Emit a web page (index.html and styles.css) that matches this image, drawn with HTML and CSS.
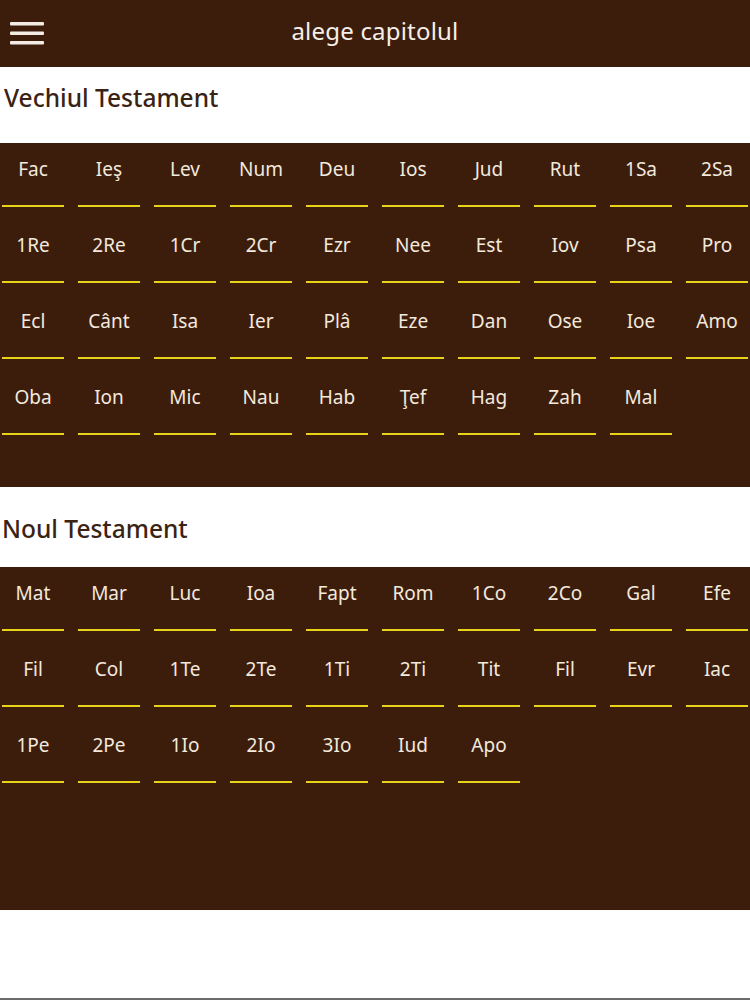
FILE: index.html
```html
<!DOCTYPE html>
<html>
<head>
<meta charset="utf-8">
<title>alege capitolul</title>
<link rel="stylesheet" href="styles.css">
</head>
<body>
<header class="topbar">
  <div class="menu">
    <svg width="34" height="24" viewBox="0 0 34 24"><rect x="0" y="1" width="34" height="3.5" rx="1" fill="#f3ece4"/><rect x="0" y="10.5" width="34" height="3.5" rx="1" fill="#f3ece4"/><rect x="0" y="20" width="34" height="3.5" rx="1" fill="#f3ece4"/></svg>
  </div>
  <h1 class="title">alege capitolul</h1>
</header>

<section class="section">
  <h2 class="section-title vt">Vechiul Testament</h2>
  <div class="grid grid-vt">
    <div class="cell"><span>Fac</span></div>
    <div class="cell"><span>Ieş</span></div>
    <div class="cell"><span>Lev</span></div>
    <div class="cell"><span>Num</span></div>
    <div class="cell"><span>Deu</span></div>
    <div class="cell"><span>Ios</span></div>
    <div class="cell"><span>Jud</span></div>
    <div class="cell"><span>Rut</span></div>
    <div class="cell"><span>1Sa</span></div>
    <div class="cell"><span>2Sa</span></div>
    <div class="cell"><span>1Re</span></div>
    <div class="cell"><span>2Re</span></div>
    <div class="cell"><span>1Cr</span></div>
    <div class="cell"><span>2Cr</span></div>
    <div class="cell"><span>Ezr</span></div>
    <div class="cell"><span>Nee</span></div>
    <div class="cell"><span>Est</span></div>
    <div class="cell"><span>Iov</span></div>
    <div class="cell"><span>Psa</span></div>
    <div class="cell"><span>Pro</span></div>
    <div class="cell"><span>Ecl</span></div>
    <div class="cell"><span>Cânt</span></div>
    <div class="cell"><span>Isa</span></div>
    <div class="cell"><span>Ier</span></div>
    <div class="cell"><span>Plâ</span></div>
    <div class="cell"><span>Eze</span></div>
    <div class="cell"><span>Dan</span></div>
    <div class="cell"><span>Ose</span></div>
    <div class="cell"><span>Ioe</span></div>
    <div class="cell"><span>Amo</span></div>
    <div class="cell"><span>Oba</span></div>
    <div class="cell"><span>Ion</span></div>
    <div class="cell"><span>Mic</span></div>
    <div class="cell"><span>Nau</span></div>
    <div class="cell"><span>Hab</span></div>
    <div class="cell"><span>Ţef</span></div>
    <div class="cell"><span>Hag</span></div>
    <div class="cell"><span>Zah</span></div>
    <div class="cell"><span>Mal</span></div>
  </div>
</section>

<section class="section">
  <h2 class="section-title nt">Noul Testament</h2>
  <div class="grid grid-nt">
    <div class="cell"><span>Mat</span></div>
    <div class="cell"><span>Mar</span></div>
    <div class="cell"><span>Luc</span></div>
    <div class="cell"><span>Ioa</span></div>
    <div class="cell"><span>Fapt</span></div>
    <div class="cell"><span>Rom</span></div>
    <div class="cell"><span>1Co</span></div>
    <div class="cell"><span>2Co</span></div>
    <div class="cell"><span>Gal</span></div>
    <div class="cell"><span>Efe</span></div>
    <div class="cell"><span>Fil</span></div>
    <div class="cell"><span>Col</span></div>
    <div class="cell"><span>1Te</span></div>
    <div class="cell"><span>2Te</span></div>
    <div class="cell"><span>1Ti</span></div>
    <div class="cell"><span>2Ti</span></div>
    <div class="cell"><span>Tit</span></div>
    <div class="cell"><span>Fil</span></div>
    <div class="cell"><span>Evr</span></div>
    <div class="cell"><span>Iac</span></div>
    <div class="cell"><span>1Pe</span></div>
    <div class="cell"><span>2Pe</span></div>
    <div class="cell"><span>1Io</span></div>
    <div class="cell"><span>2Io</span></div>
    <div class="cell"><span>3Io</span></div>
    <div class="cell"><span>Iud</span></div>
    <div class="cell"><span>Apo</span></div>
  </div>
</section>
</body>
</html>
```

FILE: styles.css
```css
* { box-sizing: border-box; }
html, body { margin: 0; padding: 0; }
body {
  width: 750px;
  height: 1000px;
  background: #ffffff;
  font-family: "Noto Sans", "Open Sans", sans-serif;
  overflow: hidden;
  border-bottom: 2px solid #6b6b6b;
}
.topbar {
  height: 67px;
  background: #3c1d0c;
  display: flex;
  align-items: center;
  justify-content: center;
  position: relative;
}
.menu {
  position: absolute;
  left: 10px;
  top: 21px;
  width: 34px;
  height: 24px;
  display: flex;
}
.title {
  margin: 0;
  font-weight: 400;
  font-size: 24px;
  color: #f6efe8;
  letter-spacing: 0.2px;
  padding-bottom: 6px;
}
.section-title {
  margin: 0;
  font-weight: 500;
  font-size: 24.5px;
  color: #3a2313;
  display: flex;
  align-items: center;
  background: #fff;
}
.section-title.vt {
  height: 75px;
  padding-left: 4px;
  padding-bottom: 16px;
  margin-top: 1px;
}
.section-title.nt {
  height: 80px;
  padding-left: 2px;
  padding-top: 3px;
}
.grid {
  background: #3c1d0c;
  display: grid;
  grid-template-columns: repeat(10, 64px);
  column-gap: 12px;
  grid-auto-rows: 76px;
  padding-left: 1px;
}
.grid-vt { padding-bottom: 40px; }
.grid-nt { padding-bottom: 115px; }
.cell {
  display: flex;
  flex-direction: column;
  align-items: center;
  padding-top: 12px;
}
.cell span {
  display: block;
  text-align: center;
  font-size: 19px;
  line-height: 28px;
  color: #f3e9dc;
}
.cell::after {
  content: "";
  display: block;
  width: 62px;
  height: 2px;
  margin-top: 22px;
  background: #e8d21a;
}
```
